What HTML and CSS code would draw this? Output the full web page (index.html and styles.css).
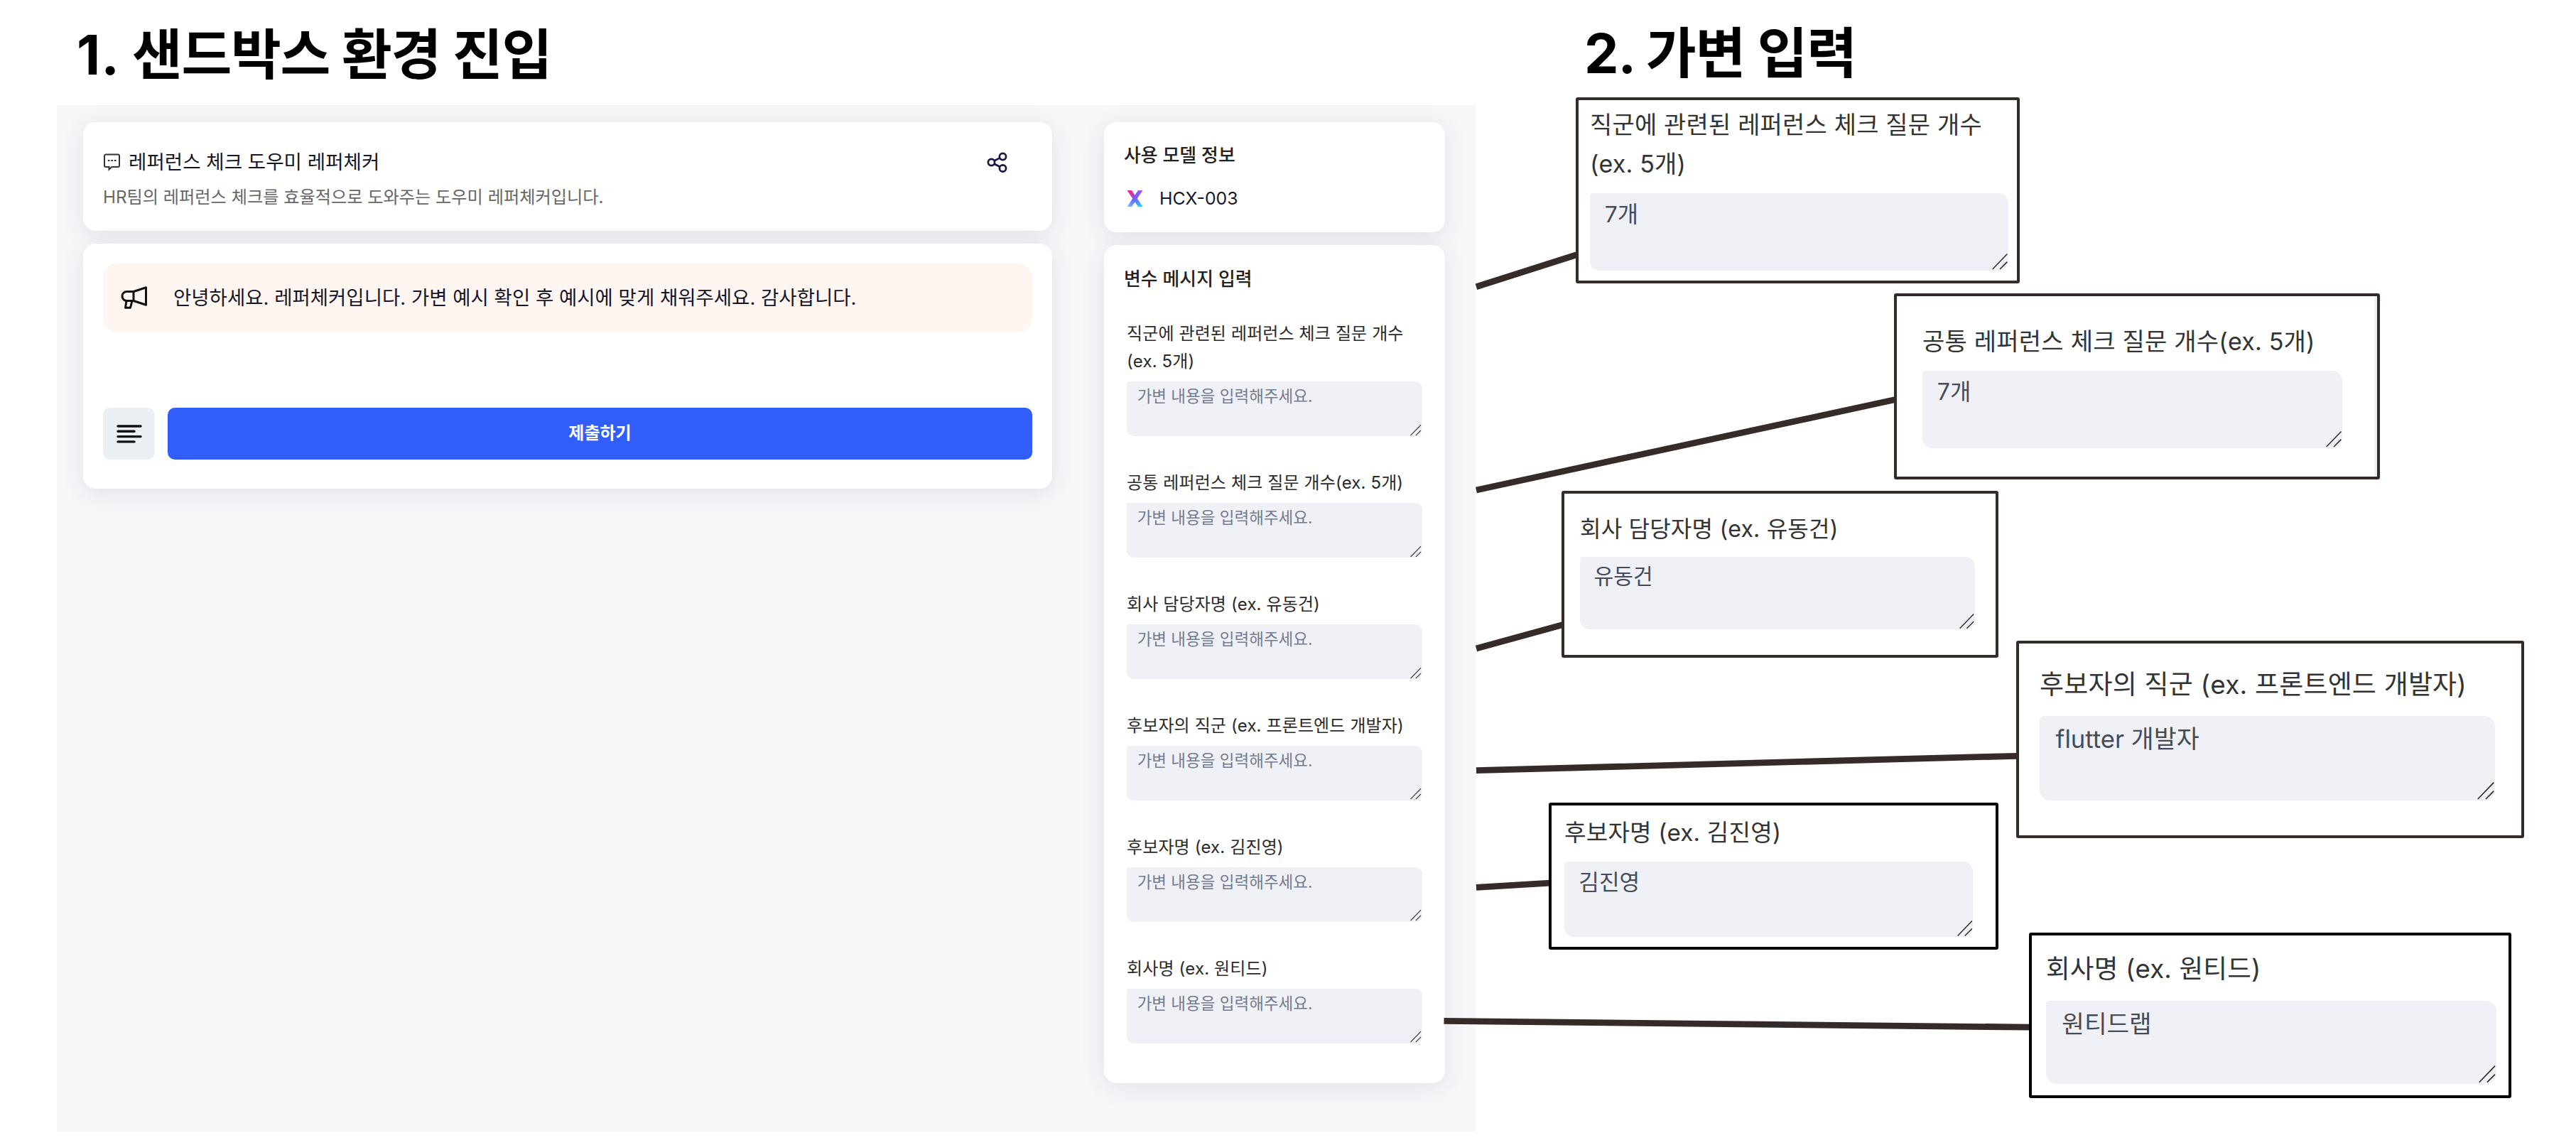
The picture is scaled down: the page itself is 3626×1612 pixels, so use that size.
FILE: index.html
```html
<!DOCTYPE html>
<html lang="ko">
<head>
<meta charset="utf-8">
<title>샌드박스 가변 입력</title>
<link rel="stylesheet" href="styles.css">
</head>
<body>
<svg class="defs" width="0" height="0">
  <symbol id="grip" viewBox="0 0 16 17"><path d="M.5 16.5 15.5 1M8 16.5l7.5-7.5" fill="none" stroke="#2b2b2b" stroke-width="1.1"/></symbol>
</svg>
<main class="board">
  <header class="headings">
    <h1 class="heading heading-first"><span class="num">1.</span> 샌드박스 환경 진입</h1>
    <h1 class="heading heading-second">2. 가변 입력</h1>
  </header>

  <section class="sandbox">
    <div class="main-col">
      <div class="card intro">
        <div class="intro-text">
          <h2 class="intro-title">
            <svg class="chat-icon" viewBox="0 0 25 27" fill="none" stroke="#333" stroke-width="2"><path d="M4 3.500h17a2 2 0 0 1 2 2v13.500a2 2 0 0 1-2 2h-8.500L8.500 24.500V21H4a2 2 0 0 1-2-2V5.500a2 2 0 0 1 2-2z"/><path d="M6.800 12h2.700m1.800 0H14m1.800 0h2.700"/></svg>
            <span>레퍼런스 체크 도우미 레퍼체커</span>
          </h2>
          <p class="intro-desc">HR팀의 레퍼런스 체크를 효율적으로 도와주는 도우미 레퍼체커입니다.</p>
        </div>
        <svg class="share-icon" viewBox="0 0 30 30" fill="none" stroke="#1d1442" stroke-width="2.700"><circle cx="6.500" cy="14.500" r="4.600"/><circle cx="22.500" cy="6.500" r="4.600"/><circle cx="22.500" cy="23" r="4.600"/><path d="M10.600 12.300l7.800-3.900M10.600 16.700l7.800 4.100"/></svg>
      </div>
      <div class="card chat">
        <div class="notice">
          <svg class="megaphone" viewBox="0 0 38 32" fill="none" stroke="#111" stroke-width="3" stroke-linejoin="round"><path d="M18 7.500 35.500 1.800v24.400L18 20.500z"/><path d="M18 7.500H8.500a6.500 6.500 0 0 0 0 13H18"/><path d="M8 20.500 6.500 30.200h7L16 20.500"/></svg>
          <span>안녕하세요. 레퍼체커입니다. 가변 예시 확인 후 예시에 맞게 채워주세요. 감사합니다.</span>
        </div>
        <div class="actions">
          <button class="log-btn" aria-label="기록"><svg viewBox="0 0 36 26" stroke="#111" stroke-width="3.400" stroke-linecap="round"><path d="M2 2h32M2 9.300h23M2 16.600h32M2 23.900h23"/></svg></button>
          <button class="submit">제출하기</button>
        </div>
      </div>
    </div>

    <div class="side-col">
      <div class="card model">
        <h3 class="side-title">사용 모델 정보</h3>
        <div class="model-row">
          <svg class="x-icon" viewBox="0 0 23 23"><defs><linearGradient id="xa" x1="0" y1="0" x2="1" y2="1"><stop offset="0" stop-color="#ff1f8f"/><stop offset=".15" stop-color="#f0259d"/><stop offset=".5" stop-color="#7a5cf5"/><stop offset="1" stop-color="#19e0ff"/></linearGradient><linearGradient id="xb" x1="1" y1="0" x2="0" y2="1"><stop offset="0" stop-color="#b44bff"/><stop offset=".6" stop-color="#4c76f2"/><stop offset="1" stop-color="#8fc0ff"/></linearGradient></defs><path d="M16 0h6.500L7 23H.5z" fill="url(#xb)"/><path d="M.5 0H7l15.500 23H16z" fill="url(#xa)"/></svg>
          <span>HCX-003</span>
        </div>
      </div>
      <div class="card variables">
        <h3 class="side-title">변수 메시지 입력</h3>
        <div class="fields">
          <div class="field"><label>직군에 관련된 레퍼런스 체크 질문 개수<br>(ex. 5개)</label><div class="area"><p>가변 내용을 입력해주세요.</p><svg class="grip"><use href="#grip"/></svg></div></div>
          <div class="field"><label>공통 레퍼런스 체크 질문 개수(ex. 5개)</label><div class="area"><p>가변 내용을 입력해주세요.</p><svg class="grip"><use href="#grip"/></svg></div></div>
          <div class="field"><label>회사 담당자명 (ex. 유동건)</label><div class="area"><p>가변 내용을 입력해주세요.</p><svg class="grip"><use href="#grip"/></svg></div></div>
          <div class="field"><label>후보자의 직군 (ex. 프론트엔드 개발자)</label><div class="area"><p>가변 내용을 입력해주세요.</p><svg class="grip"><use href="#grip"/></svg></div></div>
          <div class="field"><label>후보자명 (ex. 김진영)</label><div class="area"><p>가변 내용을 입력해주세요.</p><svg class="grip"><use href="#grip"/></svg></div></div>
          <div class="field"><label>회사명 (ex. 원티드)</label><div class="area"><p>가변 내용을 입력해주세요.</p><svg class="grip"><use href="#grip"/></svg></div></div>
        </div>
      </div>
    </div>
  </section>

  <svg class="connectors" viewBox="0 0 3626 1612" stroke="#352c2a" stroke-width="8.800">
    <path d="M2078 403.700 2219 358.700M2078 690 2668 562.500M2078 913 2200 879.500M2078 1084.600 2839 1064.300M2078 1249.300 2182 1243.200M2032.500 1437.300 2857 1446.200"/>
  </svg>

  <div class="callout field c1"><label>직군에 관련된 레퍼런스 체크 질문 개수<br>(ex. 5개)</label><div class="area"><p>7개</p><svg class="grip"><use href="#grip"/></svg></div></div>
  <div class="callout field c2"><label>공통 레퍼런스 체크 질문 개수(ex. 5개)</label><div class="area"><p>7개</p><svg class="grip"><use href="#grip"/></svg></div></div>
  <div class="callout field c3"><label>회사 담당자명 (ex. 유동건)</label><div class="area"><p>유동건</p><svg class="grip"><use href="#grip"/></svg></div></div>
  <div class="callout field c4"><label>후보자의 직군 (ex. 프론트엔드 개발자)</label><div class="area"><p>flutter 개발자</p><svg class="grip"><use href="#grip"/></svg></div></div>
  <div class="callout field c5"><label>후보자명 (ex. 김진영)</label><div class="area"><p>김진영</p><svg class="grip"><use href="#grip"/></svg></div></div>
  <div class="callout field c6"><label>회사명 (ex. 원티드)</label><div class="area"><p>원티드랩</p><svg class="grip"><use href="#grip"/></svg></div></div>
</main>
</body>
</html>
```
FILE: styles.css
```css
* { box-sizing: border-box; margin: 0; padding: 0; }
body {
  background: #fff;
  color: #1c1c1e;
  font-family: Inter, "Noto Sans CJK KR", sans-serif;
}
.defs { display: block; }
.board { position: relative; width: 3626px; height: 1612px; overflow: hidden; }

.headings { display: flex; height: 148px; padding: 21px 0 0 108px; }
.heading { font-size: 77px; font-weight: 700; line-height: 112px; color: #000; letter-spacing: -1.1px; white-space: nowrap; }
.heading .num { letter-spacing: 1px; }
.heading-first { width: 2122px; letter-spacing: -1.3px; }
.heading-second { margin-top: -2px; }

.sandbox {
  display: flex;
  gap: 73px;
  width: 1998px;
  height: 1445px;
  margin-left: 80px;
  padding: 24px 44px 0 37px;
  background: #f7f7fa;
  overflow: hidden;
}
.main-col { display: flex; flex-direction: column; gap: 18px; width: 1364px; }
.side-col { display: flex; flex-direction: column; gap: 18px; width: 480px; }
.card { background: #fff; border-radius: 18px; box-shadow: 0 6px 32px rgba(50, 30, 70, .1); }

.intro { display: flex; justify-content: space-between; height: 153px; padding: 33px 62px 0 28px; }
.intro-title { display: flex; align-items: center; gap: 11px; height: 42px; font-size: 27.6px; font-weight: 400; color: #16162a; }
.chat-icon { width: 25px; height: 27px; margin-top: 3px; }
.intro-desc { height: 40px; margin-top: 11px; font-size: 24.2px; line-height: 40px; color: #666; white-space: nowrap; }
.share-icon { width: 30px; height: 30px; margin-top: 9px; }

.chat { height: 345px; padding: 28px; }
.notice { display: flex; align-items: center; gap: 36px; height: 96px; padding-left: 25px; border-radius: 18px; background: #fff6f1; color: #16162a; font-size: 27.5px; white-space: nowrap; }
.notice span { padding-bottom: 5px; }
.megaphone { width: 38px; height: 32px; }
.actions { display: flex; gap: 18px; margin-top: 107px; }
.actions button { height: 73px; border: 0; border-radius: 10px; font-family: inherit; }
.log-btn { display: flex; align-items: center; justify-content: center; width: 73px; background: #ebf0f5; }
.log-btn svg { width: 36px; height: 26px; }
.actions .submit { flex: 1; padding-bottom: 6px; background: #315efb; color: #fff; font-size: 24px; font-weight: 700; }

.model { height: 155px; padding: 27px 28px 0; }
.side-title { height: 40px; font-size: 25.9px; font-weight: 500; line-height: 40px; color: #222; }
.model-row { display: flex; align-items: center; gap: 23px; height: 40px; margin-top: 20px; padding-left: 4px; font-size: 24.8px; color: #16162a; }
.x-icon { width: 23px; height: 23px; }
.variables { height: 1180px; padding: 28px 28px 0; }
.fields { display: flex; flex-direction: column; gap: 45.7px; margin-top: 37px; padding-left: 4px; font-size: 24px; }

/* A field's parts are in em, so each callout scales from its own font size. */
.field { display: flex; flex-direction: column; gap: .385em; color: #2a2a2a; }
.field label { line-height: 1.625em; letter-spacing: .005em; white-space: nowrap; }
.area {
  position: relative;
  width: 17.333em;
  height: 3.208em;
  padding: .3em 0 0 .61em;
  border-radius: .12em .4em .4em .4em;
  background: #f0f1f6;
  color: #737b90;
}
.area p { font-size: .938em; line-height: 1.26em; }
.grip { position: absolute; right: .04em; bottom: .03em; width: .65em; height: .7em; }

.connectors { position: absolute; left: 0; top: 0; width: 3626px; height: 1612px; }
.callout { position: absolute; border: 4px solid #352c2a; border-radius: 3px; background: #fff; color: #333; }
.callout .area { color: #454c58; }
.c1 { left: 2218px; top: 137px; width: 625px; height: 262px; padding: 7px 0 0 16px; font-size: 34px; }
.c2 { left: 2666px; top: 413px; width: 684px; height: 262px; padding: 36px 0 0 36px; font-size: 34.1px; box-shadow: inset -4px 0 #f3f1f6; }
.c3 { left: 2198px; top: 691px; width: 615px; height: 235px; padding: 24px 0 0 22px; font-size: 32.1px; }
.c4 { left: 2838px; top: 902px; width: 715px; height: 278px; padding: 28px 0 0 29px; font-size: 37px; }
.c5 { left: 2180px; top: 1130px; width: 633px; height: 207px; padding: 12px 0 0 18px; font-size: 33.2px; }
.c6 { left: 2856px; top: 1313px; width: 679px; height: 233px; padding: 18px 0 0 20px; font-size: 36.6px; }
.c5, .c6 { border-color: #000; }
```
